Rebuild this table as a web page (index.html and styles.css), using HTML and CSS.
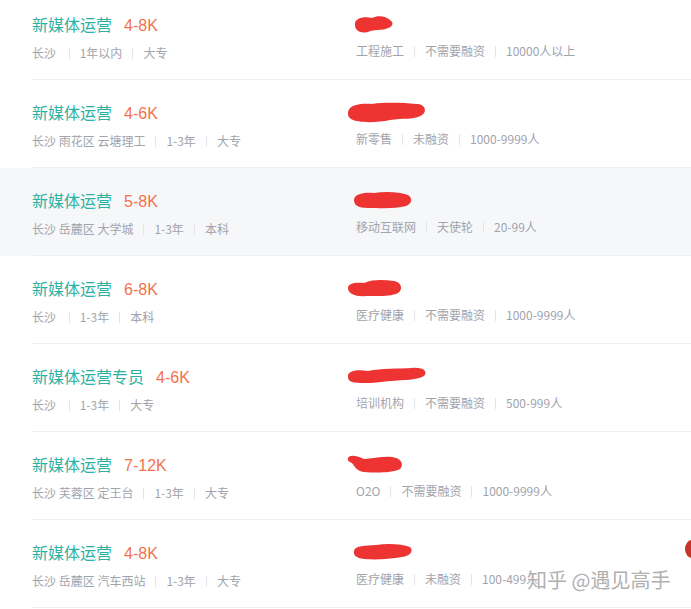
FILE: index.html
```html
<!DOCTYPE html>
<html lang="zh">

<head>
    <meta charset="UTF-8">
    <meta name="viewport" content="width=device-width, initial-scale=1.0">
    <title>职位列表</title>

    <link rel="stylesheet" href="styles.css">
</head>

<body>
    <ul class="jobs">
        <li class="job">
            <div class="job-in">
                <div class="left">
                    <p class="name">新媒体运营<span class="pay">4-8K</span></p>
                    <p class="meta"><span>长沙&nbsp;</span><i></i><span>1年以内</span><i></i><span>大专</span></p>
                </div>
                <div class="right">
                    <p class="co"><svg width="44" height="22" viewBox="0 0 44 22"><path d="M3 12 C2 5 12 3 20 5 C26 2 34 3 38 7 C42 9 41 14 36 15 C30 18 22 16 16 19 C8 21 3 17 3 12 Z" fill="#ee3333"/></svg></p>
                    <p class="meta"><span>工程施工</span><i></i><span>不需要融资</span><i></i><span>10000人以上</span></p>
                </div>
            </div>
        </li>
        <li class="job">
            <div class="job-in">
                <div class="left">
                    <p class="name">新媒体运营<span class="pay">4-6K</span></p>
                    <p class="meta"><span>长沙 雨花区 云塘理工</span><i></i><span>1-3年</span><i></i><span>大专</span></p>
                </div>
                <div class="right">
                    <p class="co shift"><svg width="82" height="28" viewBox="0 0 82 28"><path d="M2 15 C2 7 14 5 26 6 C40 4 58 5 70 6 C80 6 81 14 76 17 C70 22 56 20 44 22 C30 25 12 25 5 21 C2 19 2 17 2 15 Z" fill="#ee3333"/></svg></p>
                    <p class="meta"><span>新零售</span><i></i><span>未融资</span><i></i><span>1000-9999人</span></p>
                </div>
            </div>
        </li>
        <li class="job hl">
            <div class="job-in">
                <div class="left">
                    <p class="name">新媒体运营<span class="pay">5-8K</span></p>
                    <p class="meta"><span>长沙 岳麓区 大学城</span><i></i><span>1-3年</span><i></i><span>本科</span></p>
                </div>
                <div class="right">
                    <p class="co"><svg width="62" height="22" viewBox="0 0 62 22"><path d="M2 11 C2 5 12 3 22 4 C34 2 48 3 56 6 C61 9 60 15 54 17 C44 20 28 19 16 19 C6 19 2 16 2 11 Z" fill="#ee3333"/></svg></p>
                    <p class="meta"><span>移动互联网</span><i></i><span>天使轮</span><i></i><span>20-99人</span></p>
                </div>
            </div>
        </li>
        <li class="job">
            <div class="job-in">
                <div class="left">
                    <p class="name">新媒体运营<span class="pay">6-8K</span></p>
                    <p class="meta"><span>长沙&nbsp;</span><i></i><span>1-3年</span><i></i><span>本科</span></p>
                </div>
                <div class="right">
                    <p class="co shift"><svg width="58" height="22" viewBox="0 0 58 22"><path d="M2 12 C1 6 10 5 18 6 C28 2 38 3 48 4 C56 5 57 13 52 16 C44 20 30 19 20 19 C10 20 3 17 2 12 Z" fill="#ee3333"/></svg></p>
                    <p class="meta"><span>医疗健康</span><i></i><span>不需要融资</span><i></i><span>1000-9999人</span></p>
                </div>
            </div>
        </li>
        <li class="job">
            <div class="job-in">
                <div class="left">
                    <p class="name">新媒体运营专员<span class="pay">4-6K</span></p>
                    <p class="meta"><span>长沙&nbsp;</span><i></i><span>1-3年</span><i></i><span>大专</span></p>
                </div>
                <div class="right">
                    <p class="co shift"><svg width="82" height="22" viewBox="0 0 82 22"><path d="M2 12 C1 6 10 4 22 6 C36 3 52 4 66 3 C78 2 82 7 78 11 C72 15 58 15 44 16 C30 18 14 19 6 17 C3 16 2 14 2 12 Z" fill="#ee3333"/></svg></p>
                    <p class="meta"><span>培训机构</span><i></i><span>不需要融资</span><i></i><span>500-999人</span></p>
                </div>
            </div>
        </li>
        <li class="job">
            <div class="job-in">
                <div class="left">
                    <p class="name">新媒体运营<span class="pay">7-12K</span></p>
                    <p class="meta"><span>长沙 芙蓉区 定王台</span><i></i><span>1-3年</span><i></i><span>大专</span></p>
                </div>
                <div class="right">
                    <p class="co shift"><svg width="60" height="22" viewBox="0 0 60 22"><path d="M2 5 C4 1 12 3 18 6 C26 6 36 3 46 4 C56 5 58 12 54 16 C46 20 30 20 18 19 C10 18 8 12 6 10 C3 9 1 7 2 5 Z" fill="#ee3333"/></svg></p>
                    <p class="meta"><span>O2O</span><i></i><span>不需要融资</span><i></i><span>1000-9999人</span></p>
                </div>
            </div>
        </li>
        <li class="job">
            <div class="job-in">
                <div class="left">
                    <p class="name">新媒体运营<span class="pay">4-8K</span></p>
                    <p class="meta"><span>长沙 岳麓区 汽车西站</span><i></i><span>1-3年</span><i></i><span>大专</span></p>
                </div>
                <div class="right">
                    <p class="co"><svg width="62" height="22" viewBox="0 0 62 22"><path d="M2 10 C3 4 14 5 24 4 C36 2 50 3 58 6 C62 10 58 15 50 16 C38 18 24 19 12 18 C4 17 1 14 2 10 Z" fill="#ee3333"/></svg></p>
                    <p class="meta"><span>医疗健康</span><i></i><span>未融资</span><i></i><span>100-499人</span></p>
                </div>
            </div>
        </li>
    </ul>

    <span class="dot"></span>
    <div class="mark">知乎 @遇见高手</div>
</body>

</html>
```

FILE: styles.css
```css
body {
    margin: 0;
    background: #fff;
    font-family: "Noto Sans CJK SC", "Liberation Sans", sans-serif;
    overflow: hidden;
    position: relative;
    height: 609px;
}

p {
    margin: 0;
}

.jobs {
    list-style: none;
    margin: -8px 0 0;
    padding: 0;
}

.job {
    padding-left: 32px;
}

.job.hl {
    background: #f6f7f9;
}

.job-in {
    display: flex;
    height: 87px;
    border-bottom: 1px solid #eeeff2;
}

.left {
    width: 324px;
    padding-top: 21px;
}

.right {
    flex: 1;
    padding-top: 21px;
}

.name {
    font-size: 16px;
    line-height: 22px;
    color: #2bb2a2;
    white-space: nowrap;
}

.pay {
    color: #f2724f;
    margin-left: 12px;
    font-family: "Liberation Sans", sans-serif;
}

.co {
    height: 22px;
    display: flex;
    align-items: center;
    margin-left: -4px;
}

.co.shift {
    margin-left: -10px;
}

.meta {
    margin-top: 6px;
    font-size: 12px;
    line-height: 20px;
    color: #a2a4ac;
    display: flex;
    align-items: center;
    white-space: nowrap;
}

.meta i {
    display: inline-block;
    width: 1px;
    height: 11px;
    background: #e4e5e8;
    margin: 0 10px;
}

.dot {
    position: absolute;
    right: -8px;
    top: 540px;
    width: 14px;
    height: 18px;
    border-radius: 50%;
    background: #c8332c;
}

/* watermark, drawn over the last row like in the screenshot */
.mark {
    position: absolute;
    left: 527px;
    top: 566px;
    font-size: 20px;
    line-height: 28px;
    color: #b0b0b0;
    text-shadow: 0 0 2px #fff, 0 0 2px #fff;
}
```
